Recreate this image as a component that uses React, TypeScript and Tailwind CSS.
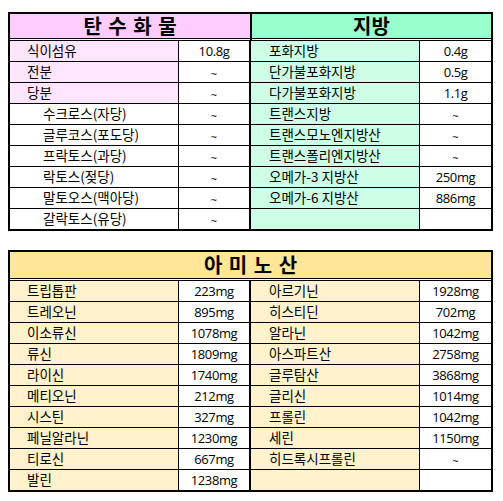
import React from "react";

type Row = { l1: string; v1: string; sub?: boolean; pink?: boolean; l2: string; v2: string };

const topRows: Row[] = [
  { l1: "식이섬유", v1: "10.8g", pink: true, l2: "포화지방", v2: "0.4g" },
  { l1: "전분", v1: "~", pink: true, l2: "단가불포화지방", v2: "0.5g" },
  { l1: "당분", v1: "~", pink: true, l2: "다가불포화지방", v2: "1.1g" },
  { l1: "수크로스(자당)", v1: "~", sub: true, l2: "트랜스지방", v2: "~" },
  { l1: "글루코스(포도당)", v1: "~", sub: true, l2: "트랜스모노엔지방산", v2: "~" },
  { l1: "프락토스(과당)", v1: "~", sub: true, l2: "트랜스폴리엔지방산", v2: "~" },
  { l1: "락토스(젖당)", v1: "~", sub: true, l2: "오메가-3 지방산", v2: "250mg" },
  { l1: "말토오스(맥아당)", v1: "~", sub: true, l2: "오메가-6 지방산", v2: "886mg" },
  { l1: "갈락토스(유당)", v1: "~", sub: true, l2: "", v2: "" },
];

const aminoRows: [string, string, string, string][] = [
  ["트립톱판", "223mg", "아르기닌", "1928mg"],
  ["트레오닌", "895mg", "히스티딘", "702mg"],
  ["이소류신", "1078mg", "알라닌", "1042mg"],
  ["류신", "1809mg", "아스파트산", "2758mg"],
  ["라이신", "1740mg", "글루탐산", "3868mg"],
  ["메티오닌", "212mg", "글리신", "1014mg"],
  ["시스틴", "327mg", "프롤린", "1042mg"],
  ["페닐알라닌", "1230mg", "세린", "1150mg"],
  ["티로신", "667mg", "히드록시프롤린", "~"],
  ["발린", "1238mg", "", ""],
];

function Value({ v, last }: { v: string; last?: boolean }) {
  return (
    <div
      className={
        "h-full flex items-center justify-center bg-white [font-family:Open_Sans,Noto_Sans,sans-serif] " +
        (last ? "flex-1" : "w-[70px]")
      }
    >
      <span className={v === "~" ? "text-[11px] leading-none pt-[2px]" : "text-[13px] leading-none tracking-[-0.4px]"}>{v}</span>
    </div>
  );
}

export default function App() {
  return (
    <div className="[font-family:Noto_Sans_CJK_KR,Noto_Sans,sans-serif] text-[13.5px] text-black bg-white w-[503px] h-[501px] pt-[12px] pl-[8px]">
      {/* Top table */}
      <div className="w-[485px] border-2 border-black bg-white">
        <div className="flex h-[27px]">
          <div className="w-[240px] h-full bg-[#ffccff] bg-clip-padding border-b-[3px] border-double border-black flex items-center justify-center text-[20px] font-bold leading-none [word-spacing:2px]">
            탄 수 화 물
          </div>
          <div className="w-[2px] h-full bg-black" />
          <div className="flex-1 h-full bg-[#99ffcc] bg-clip-padding border-b-[3px] border-double border-black flex items-center justify-center text-[20px] font-bold leading-none">
            지방
          </div>
        </div>
        {topRows.map((r, i) => {
          const last = i === topRows.length - 1;
          return (
            <div
              key={i}
              className={
                "flex " + (last ? "h-[20px]" : "h-[21px] border-b border-black")
              }
            >
              <div
                className={
                  "w-[169px] h-full border-r border-black flex items-center leading-none " +
                  (r.pink ? "bg-[#ffe5ff] pl-[17px]" : "bg-white pl-[33px]")
                }
              >
                {r.l1}
              </div>
              <Value v={r.v1} />
              <div className="w-[2px] h-full bg-black" />
              <div className="w-[169px] h-full border-r border-black flex items-center leading-none bg-[#ccffe6] pl-[18px]">
                {r.l2}
              </div>
              <Value v={r.v2} last />
            </div>
          );
        })}
      </div>

      {/* Amino acid table */}
      <div className="w-[485px] mt-[19px] border-2 border-black bg-white">
        <div className="h-[29px] bg-[#ffe699] bg-clip-padding border-b-[3px] border-double border-black flex items-center justify-center text-[20px] font-bold leading-none [word-spacing:2px]">
          아 미 노 산
        </div>
        {aminoRows.map((r, i) => {
          const last = i === aminoRows.length - 1;
          return (
            <div
              key={i}
              className={
                "flex " + (last ? "h-[20px]" : "h-[21px] border-b border-black")
              }
            >
              <div className="w-[169px] h-full border-r border-black flex items-center leading-none bg-[#fff2cc] pl-[17px]">
                {r[0]}
              </div>
              <Value v={r[1]} />
              <div className="w-[2px] h-full bg-black" />
              <div className="w-[169px] h-full border-r border-black flex items-center leading-none bg-[#fff2cc] pl-[18px]">
                {r[2]}
              </div>
              <Value v={r[3]} last />
            </div>
          );
        })}
      </div>
    </div>
  );
}
